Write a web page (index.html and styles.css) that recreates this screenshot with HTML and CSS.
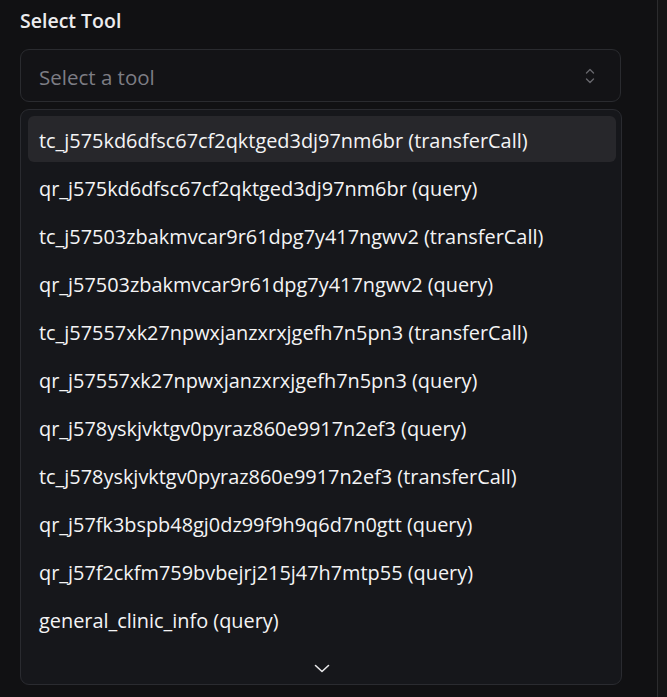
FILE: index.html
```html
<!DOCTYPE html>
<html lang="en">
<head>
<meta charset="utf-8">
<title>Select Tool</title>
<link rel="stylesheet" href="styles.css">
</head>
<body>
<div class="page">
  <main class="main">
    <label class="label">Select Tool</label>
    <div class="select">
      <span class="placeholder">Select a tool</span>
      <svg class="updown" width="10" height="16" viewBox="0 0 10 16" fill="none" stroke="currentColor" stroke-width="1.4" stroke-linecap="round" stroke-linejoin="round"><path d="M1.5 5 L5 1.5 L8.5 5"/><path d="M1.5 11 L5 14.5 L8.5 11"/></svg>
    </div>
    <div class="dropdown">
      <ul class="list">
        <li class="item active">tc_j575kd6dfsc67cf2qktged3dj97nm6br (transferCall)</li>
        <li class="item">qr_j575kd6dfsc67cf2qktged3dj97nm6br (query)</li>
        <li class="item">tc_j57503zbakmvcar9r61dpg7y417ngwv2 (transferCall)</li>
        <li class="item">qr_j57503zbakmvcar9r61dpg7y417ngwv2 (query)</li>
        <li class="item">tc_j57557xk27npwxjanzxrxjgefh7n5pn3 (transferCall)</li>
        <li class="item">qr_j57557xk27npwxjanzxrxjgefh7n5pn3 (query)</li>
        <li class="item">qr_j578yskjvktgv0pyraz860e9917n2ef3 (query)</li>
        <li class="item">tc_j578yskjvktgv0pyraz860e9917n2ef3 (transferCall)</li>
        <li class="item">qr_j57fk3bspb48gj0dz99f9h9q6d7n0gtt (query)</li>
        <li class="item">qr_j57f2ckfm759bvbejrj215j47h7mtp55 (query)</li>
        <li class="item">general_clinic_info (query)</li>
      </ul>
      <div class="scroll-down">
        <svg width="16" height="9" viewBox="0 0 16 9" fill="none" stroke="currentColor" stroke-width="1.6" stroke-linecap="round" stroke-linejoin="round"><path d="M1.5 1.5 L8 7.5 L14.5 1.5"/></svg>
      </div>
    </div>
  </main>
  <aside class="side"></aside>
</div>
</body>
</html>
```
FILE: styles.css
```css
html, body {
  margin: 0;
  padding: 0;
  background: #111113;
  height: 100%;
}
body {
  font-family: "Open Sans", "Noto Sans", sans-serif;
  color: #f4f4f5;
}
.page {
  display: flex;
  height: 697px;
  overflow: hidden;
}
.main {
  width: 657px;
  box-sizing: border-box;
  padding: 6px 36px 0 20px;
  display: flex;
  flex-direction: column;
}
.side {
  flex: 1;
  border-left: 1px solid #2c2c2e;
  background: #151516;
}
.label {
  display: block;
  font-size: 19.5px;
  font-weight: 600;
  line-height: 30px;
  color: #ececee;
  margin-bottom: 13px;
}
.select {
  height: 53px;
  box-sizing: border-box;
  border: 1px solid #2a2b2f;
  border-radius: 9px;
  display: flex;
  align-items: center;
  justify-content: space-between;
  padding: 2px 25px 0 18px;
  background: #131316;
}
.placeholder {
  font-size: 20.5px;
  color: #7d7d84;
}
.updown {
  color: #66666c;
  margin-top: -2px;
}
.dropdown {
  margin-top: 7px;
  width: 602px;
  height: 576px;
  box-sizing: border-box;
  border: 1px solid #2a2b30;
  border-radius: 9px;
  background: #16171b;
  padding: 6px 5px 0 7px;
  display: flex;
  flex-direction: column;
}
.list {
  list-style: none;
  margin: 0;
  padding: 0;
  display: flex;
  flex-direction: column;
  gap: 2px;
}
.item {
  height: 46px;
  box-sizing: border-box;
  display: flex;
  align-items: center;
  padding: 2px 0 0 11px;
  border-radius: 6px;
  font-size: 19.9px;
  color: #f4f4f5;
  white-space: nowrap;
}
.item.active {
  background: #27272b;
}
.scroll-down {
  flex: 1;
  display: flex;
  justify-content: center;
  align-items: flex-end;
  padding-bottom: 11px;
  color: #e8e8ea;
}
```
